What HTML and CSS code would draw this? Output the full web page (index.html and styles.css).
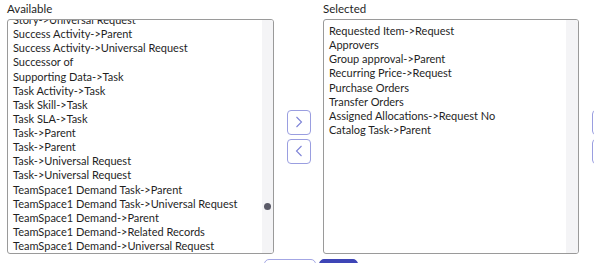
FILE: index.html
```html
<!DOCTYPE html>
<html lang="en">
<head>
    <meta charset="UTF-8">
    <title>Related lists</title>
    <link rel="stylesheet" href="styles.css">
</head>
<body>
    <div class="slushbucket">
        <div class="column column-left">
            <div class="label">Available</div>
            <div class="box">
                <div class="list">
                    <div class="items items-scrolled">
                        <div class="item">Story-&gt;Universal Request</div>
                        <div class="item">Success Activity-&gt;Parent</div>
                        <div class="item">Success Activity-&gt;Universal Request</div>
                        <div class="item">Successor of</div>
                        <div class="item">Supporting Data-&gt;Task</div>
                        <div class="item">Task Activity-&gt;Task</div>
                        <div class="item">Task Skill-&gt;Task</div>
                        <div class="item">Task SLA-&gt;Task</div>
                        <div class="item">Task-&gt;Parent</div>
                        <div class="item">Task-&gt;Parent</div>
                        <div class="item">Task-&gt;Universal Request</div>
                        <div class="item">Task-&gt;Universal Request</div>
                        <div class="item">TeamSpace1 Demand Task-&gt;Parent</div>
                        <div class="item">TeamSpace1 Demand Task-&gt;Universal Request</div>
                        <div class="item">TeamSpace1 Demand-&gt;Parent</div>
                        <div class="item">TeamSpace1 Demand-&gt;Related Records</div>
                        <div class="item">TeamSpace1 Demand-&gt;Universal Request</div>
                    </div>
                </div>
                <div class="gutter">
                    <div class="thumb"></div>
                </div>
            </div>
        </div>

        <div class="arrows">
            <button class="arrow-btn" title="Add">
                <svg width="8" height="12" viewBox="0 0 8 12"><polyline points="1.5,1 6.5,6 1.5,11" fill="none" stroke="#7d82d6" stroke-width="1.1"/></svg>
            </button>
            <button class="arrow-btn" title="Remove">
                <svg width="8" height="12" viewBox="0 0 8 12"><polyline points="6.5,1 1.5,6 6.5,11" fill="none" stroke="#7d82d6" stroke-width="1.1"/></svg>
            </button>
        </div>

        <div class="column column-right">
            <div class="label">Selected</div>
            <div class="box">
                <div class="list">
                    <div class="items">
                        <div class="item">Requested Item-&gt;Request</div>
                        <div class="item">Approvers</div>
                        <div class="item">Group approval-&gt;Parent</div>
                        <div class="item">Recurring Price-&gt;Request</div>
                        <div class="item">Purchase Orders</div>
                        <div class="item">Transfer Orders</div>
                        <div class="item">Assigned Allocations-&gt;Request No</div>
                        <div class="item">Catalog Task-&gt;Parent</div>
                    </div>
                </div>
                <div class="gutter"></div>
            </div>
        </div>

        <div class="arrows arrows-edge">
            <button class="arrow-btn" title="Move up"></button>
            <button class="arrow-btn" title="Move down"></button>
        </div>
    </div>

    <div class="actions">
        <button class="action action-cancel" aria-label="Cancel"></button>
        <button class="action action-save" aria-label="Save"></button>
    </div>
</body>
</html>
```

FILE: styles.css
```css
body {
    margin: 0;
    height: 263px;
    font-family: Lato, "Liberation Sans", sans-serif;
    font-size: 11px;
    color: #1f1f1f;
    background-color: #fff;
    overflow: hidden;
}
.slushbucket {
    display: flex;
    align-items: flex-start;
    padding-left: 7px;
}
.column {
    display: flex;
    flex-direction: column;
    flex-shrink: 0;
}
.column-left {
    width: 267px;
}
.column-right {
    width: 256px;
}
.label {
    height: 19px;
    line-height: 17px;
    font-size: 11.5px;
}
.box {
    display: flex;
    height: 235px;
    box-sizing: border-box;
    border: 1px solid #9a9a9a;
    border-radius: 3px;
    overflow: hidden;
}
.list {
    flex: 1;
    overflow: hidden;
    padding: 4px 5px 0;
}
.items-scrolled {
    margin-top: -11px;
}
.item {
    height: 14.14px;
    line-height: 14.14px;
    white-space: nowrap;
}
.gutter {
    width: 11px;
    background-color: #f4f4f6;
    position: relative;
}
.column-right .gutter {
    width: 12px;
}
.thumb {
    position: absolute;
    left: 2px;
    top: 183px;
    width: 7px;
    height: 7px;
    border-radius: 50%;
    background-color: #5b5b68;
}
.arrows {
    display: flex;
    flex-direction: column;
    flex-shrink: 0;
    gap: 4px;
    height: 235px;
    margin-top: 19px;
    justify-content: center;
    margin-left: 13px;
    margin-right: 12px;
}
.arrows-edge {
    margin-right: 0;
}
.arrow-btn {
    width: 24px;
    height: 25px;
    padding: 0;
    border: 1px solid #9a9ee0;
    border-radius: 4px;
    background-color: #fff;
    display: flex;
    align-items: center;
    justify-content: center;
}
.actions {
    display: flex;
    gap: 3px;
    padding-left: 264px;
    margin-top: 5px;
}
.action {
    height: 26px;
    padding: 0;
    border-radius: 5px;
}
.action-cancel {
    width: 52px;
    border: 1px solid #a3a6e4;
    background-color: #fff;
}
.action-save {
    width: 39px;
    border: 1px solid #3e45b6;
    background-color: #3e45b6;
}
```
